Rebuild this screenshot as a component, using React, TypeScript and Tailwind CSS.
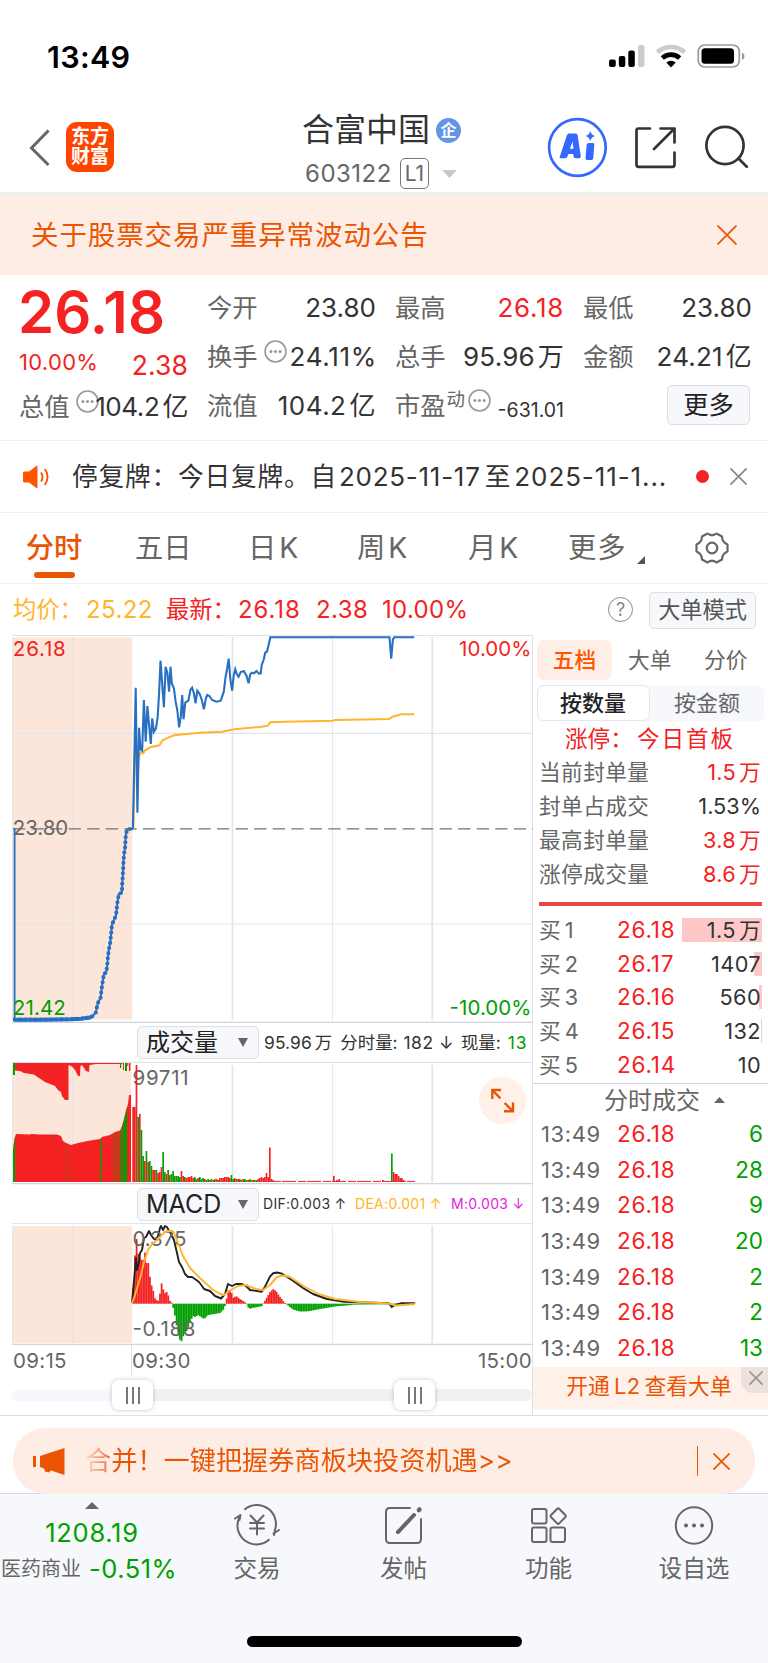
import React from "react";

type Pt = [number, number];

const toPath = (flat: number[], sx = 1, sy = 1, oy = 0): string => {
  const out: string[] = [];
  for (let i = 0; i < flat.length; i += 2) {
    out.push(`${(flat[i] / sx).toFixed(1)},${(flat[i + 1] / sy + oy).toFixed(1)}`);
  }
  return out.join(" ");
};

const interpolate = (points: Pt[], x: number): number => {
  for (let i = 1; i < points.length; i++) {
    if (x <= points[i][0]) {
      const [x0, y0] = points[i - 1];
      const [x1, y1] = points[i];
      return y0 + ((y1 - y0) * (x - x0)) / (x1 - x0 || 1);
    }
  }
  return points[points.length - 1][1];
};

const RED = "#f42222";
const GREEN = "#00a000";
const GRID = "#e1e5ed";

/* ---------- intraday series ---------- */

const auction = [
  43, 1199, 120, 1199, 205, 1198, 235, 1196, 265, 1192, 278, 1178, 284, 1150, 292, 1133, 295, 1108, 298, 1087, 302, 1060,
  308, 1059, 311, 1040, 313, 1015, 316, 990, 320, 968, 323, 940, 325, 915, 331, 900, 337, 886, 339, 868, 341, 848, 345,
  822, 354, 818, 355, 793, 357, 762, 359, 718, 361, 698, 363, 685, 365, 650, 368, 632, 372, 627, 386, 627,
];

const price = [
  386, 626, 394, 203, 399, 578, 404, 323, 408, 388, 413, 392, 418, 240, 423, 365, 428, 258, 438, 372, 442, 295, 447, 335,
  453, 325, 458, 290, 462, 220, 466, 122, 476, 262, 481, 140, 486, 160, 491, 215, 495, 140, 499, 190, 505, 205, 510, 245,
  515, 270, 520, 322, 525, 290, 529, 225, 533, 298, 538, 248, 547, 242, 553, 210, 558, 203, 563, 220, 568, 250, 573, 212,
  580, 222, 586, 240, 592, 268, 598, 235, 602, 225, 608, 228, 616, 240, 628, 245, 641, 242, 650, 215, 655, 170, 659, 150,
  664, 116, 669, 180, 674, 212, 679, 165, 683, 148, 688, 163, 693, 170, 699, 156, 708, 153, 716, 168, 722, 190, 727, 162,
  732, 158, 738, 160, 745, 153, 752, 161, 757, 160, 760, 135, 766, 118, 770, 98, 775, 95, 780, 75, 785, 52, 1131, 52,
  1136, 116, 1141, 58, 1145, 52, 1203, 52,
];

const average = [
  387, 626, 392, 390, 399, 440, 405, 405, 409, 397, 416, 400, 422, 390, 438, 381, 463, 376, 472, 361, 490, 352, 505, 346,
  580, 338, 645, 335, 680, 328, 755, 321, 778, 317, 785, 307, 830, 305, 965, 302, 975, 300, 1130, 297, 1140, 290, 1165,
  283, 1203, 283,
];

const dif = [
  132, 1303, 136, 1258, 137, 1270, 139, 1262, 140, 1253, 142, 1250, 144, 1238, 146, 1237, 149, 1231, 151, 1235, 154,
  1239, 156, 1240, 158, 1236, 160, 1228, 161, 1226, 163, 1230, 165, 1226, 167, 1227, 168, 1229, 171, 1234, 174, 1240,
  177, 1253, 179, 1262, 182, 1267, 185, 1274, 188, 1277, 192, 1277, 195, 1279, 199, 1282, 202, 1286, 204, 1289, 210,
  1291, 215, 1296, 221, 1298.5, 225, 1294, 228, 1284, 232, 1286, 236, 1284, 242, 1284, 246, 1286, 250, 1290, 261.7,
  1291.7, 265, 1286.7, 270, 1276.7, 273, 1273.3, 277, 1272.5, 282, 1273.7, 293, 1280.7, 303, 1288, 313, 1294, 327, 1299,
  344, 1301.7, 389, 1303.3, 391.5, 1306.5, 396, 1304.7, 401, 1303.3, 415, 1303.3,
];

const dea = [
  132, 1303, 135, 1295, 141, 1275, 144, 1262, 148, 1250, 152, 1244, 156, 1241, 160, 1237, 165, 1232, 168, 1231, 172, 1231,
  174, 1233, 178, 1243, 183, 1256, 190, 1268, 200, 1278, 212, 1289, 220, 1294, 224, 1295, 229, 1291, 238, 1286, 246, 1285,
  256, 1289, 263, 1290, 270, 1285, 277, 1277, 283, 1275.5, 290, 1277, 305, 1287, 320, 1294.5, 335, 1299, 360, 1302, 389,
  1303.5, 396, 1305.5, 415, 1304,
];

const ZERO = 1303.7;
const histogram: Pt[] = [
  [132, 1300], [134, 1280], [135.5, 1239], [137, 1239], [137.5, 1252], [140, 1258], [143, 1262], [144, 1252], [145.5, 1253],
  [146, 1263], [148.5, 1263], [149, 1271], [151, 1284], [153, 1289], [154, 1297], [156, 1300], [159, 1301], [160, 1293],
  [161, 1283], [162.5, 1284], [164, 1295], [166, 1291], [168, 1294], [169, 1300], [172, 1303], [173, 1307], [175, 1316],
  [177, 1328], [179, 1337], [181, 1343], [183, 1337], [185, 1331], [187, 1331], [190, 1322], [193, 1316], [195, 1317],
  [198, 1315], [201, 1317], [204, 1319], [208, 1315], [214, 1314], [220, 1313], [224, 1309], [225.5, 1304], [226.5, 1299],
  [228, 1290], [231, 1291], [233, 1298], [236, 1296], [240, 1299], [246, 1303], [247, 1305], [249, 1309], [252, 1308],
  [258, 1307], [262, 1306], [263.5, 1303], [266, 1299], [270, 1292], [273, 1289], [276, 1291], [280, 1297], [285, 1303],
  [288, 1305.5], [293, 1309.5], [300, 1311.5], [308, 1311.3], [320, 1309], [335, 1306.5], [355, 1304.6], [388, 1304.2],
  [390, 1305], [392, 1309], [394, 1305.5], [397, 1303.2], [415, 1303.2],
];

/* top edge and colour of every volume bar after the open */
const BAR = 1.667;
const openingBars: Array<[number, "r" | "g"]> = [
  [1107, "r"], [1107, "r"], [1065, "r"], [1117, "g"], [1114, "r"], [1130, "g"], [1156, "g"], [1161, "r"], [1151, "g"],
  [1162, "r"], [1161, "g"], [1166, "g"], [1170, "r"], [1170, "r"], [1170, "g"], [1173, "r"], [1172, "r"], [1167, "r"],
  [1152, "g"], [1172, "g"], [1174, "r"], [1170, "g"], [1175, "r"], [1174, "g"], [1171, "g"], [1176, "g"], [1176, "g"],
  [1176, "g"], [1177, "g"], [1171, "r"], [1176, "r"], [1177, "g"], [1178, "r"], [1177, "r"], [1177, "r"], [1176, "r"],
  [1178, "r"], [1177, "g"], [1179, "g"], [1178, "r"], [1177, "g"], [1179, "g"], [1178, "g"], [1179, "r"], [1180, "g"],
  [1179, "g"], [1180, "r"], [1179, "g"], [1180, "g"], [1179, "r"], [1179, "r"], [1180, "g"], [1178, "r"], [1178, "r"],
  [1178, "r"], [1177, "r"], [1177, "r"], [1177, "r"], [1178, "r"], [1175, "g"], [1179, "g"], [1178, "r"], [1179, "g"],
  [1179, "r"], [1179, "r"], [1180, "g"], [1179, "r"], [1179, "g"], [1180, "g"], [1180, "g"], [1179, "r"], [1180, "g"],
  [1180, "r"], [1180, "g"], [1180, "g"], [1179, "r"], [1178, "r"], [1177, "r"], [1178, "r"], [1177, "r"], [1173, "r"],
  [1177, "r"], [1147.5, "r"], [1179, "r"], [1180, "r"],
];

const lateBars: Array<[number, number, string]> = [
  [333, 1176, RED], [336, 1180, RED], [338.3, 1179, RED], [382, 1180, RED], [391, 1153.5, GREEN], [392.7, 1172, RED],
  [394.3, 1174, RED], [396, 1174, RED], [397.7, 1176, RED], [399.3, 1178, RED], [401, 1178, RED], [402.5, 1180, RED],
];

const auctionBottom =
  "13,1182 13,1152 14,1142 15,1137 16,1134 30,1134.5 31,1134 40,1134.5 57,1134.5 61,1136 63,1141 66,1143 71,1145 78,1143 90,1140.5 100,1139 102,1137 110,1135 115,1132 120,1130.5 122,1126 124,1119 126,1110 128,1104 129,1095 131,1095 131,1182";
const auctionTop =
  "15,1063 15,1070.5 20,1071 24,1073 34,1074.5 36,1076 39,1078 45,1082 50,1084 55,1086 58,1090 61,1092 62,1096 65,1100 68.5,1100 68.5,1065 72,1066.5 75,1070 78,1076 80,1076 80.5,1066 82,1065 84,1068 86,1071 89,1072 89.5,1065 96,1064 122,1064 123,1063";

const Verticals = ({ top, bottom }: { top: number; bottom: number }) => (
  <g stroke={GRID}>
    <line x1={12.6} x2={12.6} y1={top} y2={bottom} strokeWidth={1} />
    <line x1={72.7} x2={72.7} y1={top} y2={bottom} strokeWidth={1.2} />
    <line x1={232.5} x2={232.5} y1={top} y2={bottom} strokeWidth={1.8} />
    <line x1={332.4} x2={332.4} y1={top} y2={bottom} strokeWidth={1} />
    <line x1={432.2} x2={432.2} y1={top} y2={bottom} strokeWidth={1.8} />
  </g>
);

const PriceChart = () => (
  <svg className="block h-[388px] w-[533px]" viewBox="0 635 533 388" fontFamily="Inter, 'Liberation Sans', sans-serif">
    <rect x={12.5} y={637.5} width={119.7} height={382} fill="#fce6da" />
    <line x1={12} x2={533} y1={635.5} y2={635.5} stroke="#dfe2e8" />
    <Verticals top={637} bottom={1020} />
    <g stroke={GRID} strokeWidth={1.2}>
      <line x1={12} x2={532} y1={733.4} y2={733.4} />
      <line x1={12} x2={532} y1={924} y2={924} />
    </g>
    <line x1={12} x2={533} y1={1022.3} y2={1022.3} stroke="#cfd4dd" strokeWidth={1.2} />
    <line x1={13} x2={533} y1={828.8} y2={828.8} stroke="#737373" strokeWidth={1.3} strokeDasharray="12.3 6.25" />
    <polyline points={toPath(average, 2.904, 3, 620)} fill="none" stroke="#ffb52b" strokeWidth={2} />
    <line x1={14.6} x2={14.6} y1={828} y2={1020} stroke="#2a70c2" strokeWidth={1.8} />
    <g fontSize={20.5}>
      <text x={12.8} y={655.8} fill={RED} textLength={53}>26.18</text>
      <text x={459} y={655.8} fill={RED} textLength={72.5}>10.00%</text>
      <text x={12.8} y={835.3} fill="#666" textLength={55.5}>23.80</text>
      <text x={12.8} y={1014.8} fill={GREEN} textLength={53}>21.42</text>
      <text x={449.5} y={1014.8} fill={GREEN} textLength={82}>-10.00%</text>
    </g>
    <polyline
      points={toPath(auction, 2.904, 3, 620)}
      fill="none"
      stroke="#2a70c2"
      strokeWidth={2}
      strokeLinejoin="round"
    />
    <polyline
      points={toPath(auction, 2.904, 3, 620)}
      fill="none"
      stroke="#2a70c2"
      strokeWidth={4.2}
      strokeLinecap="round"
      strokeDasharray="0 5.2"
    />
    <polyline points={toPath(auction.slice(0, 10), 2.904, 3, 620)} fill="none" stroke="#2a70c2" strokeWidth={4} />
    <polyline points={toPath(price, 2.904, 3, 620)} fill="none" stroke="#2a70c2" strokeWidth={2.1} />
  </svg>
);

const VolumeChart = () => (
  <svg className="block h-[123px] w-[533px]" viewBox="0 1062 533 123" fontFamily="Inter, 'Liberation Sans', sans-serif">
    <rect x={12.5} y={1063} width={118.7} height={119} fill="#fce6da" />
    <Verticals top={1065} bottom={1182} />
    <line x1={12} x2={533} y1={1062.5} y2={1062.5} stroke="#dfe2e8" />
    <line x1={12} x2={533} y1={1183.6} y2={1183.6} stroke="#cfd4dd" strokeWidth={1.2} />
    <polygon points={auctionTop} fill={RED} />
    <polygon points={auctionBottom} fill={RED} />
    <g fill={GREEN}>
      <rect x={13} y={1063} width={2} height={12} />
      <polygon points="13,1182 13,1152 14,1142 15,1137 15,1182" />
      <rect x={120} y={1063} width={1.2} height={5} />
      <rect x={125} y={1063} width={2} height={8} />
      <rect x={100.3} y={1139} width={1.5} height={43} />
      <rect x={119.8} y={1131} width={1.4} height={51} />
      <polygon points="121.8,1182 121.8,1127 123.2,1122 123.2,1182" />
      <polygon points="123.8,1182 123.8,1120 127,1109 127,1182" />
    </g>
    <g fill="#8f5a12">
      <rect x={67.3} y={1143.5} width={0.9} height={38.5} />
      <rect x={113.2} y={1134} width={1} height={48} />
      <rect x={115.4} y={1133} width={1} height={49} />
      <rect x={117.6} y={1132} width={0.8} height={50} />
    </g>
    <g fill={RED}>
      <rect x={123} y={1063} width={1} height={7} />
      <rect x={127.3} y={1063} width={1} height={3} />
      <rect x={129} y={1063} width={1.4} height={8} />
    </g>
    <text x={132.5} y={1084.6} fontSize={20.5} fill="#666" textLength={56}>99711</text>
    {openingBars.map(([top, c], i) => (
      <rect key={i} x={132.3 + i * BAR} y={top} width={BAR} height={1182 - top} fill={c === "r" ? RED : GREEN} />
    ))}
    <line x1={273} x2={415} y1={1181.4} y2={1181.4} stroke={RED} strokeWidth={1} strokeDasharray="8 1 14 2" />
    {lateBars.map(([x, top, c]) => (
      <rect key={x} x={x} y={top} width={BAR} height={1182 - top} fill={c} />
    ))}
    <circle cx={502.5} cy={1100.5} r={23.5} fill="#fff0e9" />
    <g fill="none" stroke="#ea5504" strokeWidth={2.4}>
      <path d="M492.3 1099v-9h8.8M492.8 1090.5l7.6 7.8" />
      <path d="M513 1102.5v8.800h-9M512.600 1110.800l-8-7.800" />
    </g>
  </svg>
);

const MacdChart = () => {
  const bars: React.ReactNode[] = [];
  for (let x = 132.4; x < 415; x += BAR) {
    const y = interpolate(histogram, x + BAR / 2);
    const up = y < ZERO;
    bars.push(
      <rect key={x} x={x} y={up ? y : ZERO} width={BAR + 0.1} height={Math.max(Math.abs(y - ZERO), 0.5)} fill={up ? RED : GREEN} />,
    );
  }
  return (
    <svg className="block h-[122px] w-[533px]" viewBox="0 1223 533 122" fontFamily="Inter, 'Liberation Sans', sans-serif">
      <rect x={12.5} y={1226} width={119.7} height={117} fill="#fce6da" />
      <Verticals top={1226} bottom={1343} />
      <line x1={12} x2={533} y1={1223.6} y2={1223.6} stroke="#dfe2e8" />
      <line x1={12} x2={533} y1={1344.4} y2={1344.4} stroke="#cfd4dd" strokeWidth={1.2} />
      {bars}
      <polyline points={toPath(dif)} fill="none" stroke="#222" strokeWidth={1.9} strokeLinejoin="round" />
      <g fontSize={20.5} fill="#666">
        <text x={132.5} y={1245.6} textLength={54}>0.375</text>
        <text x={132.5} y={1336} textLength={63}>-0.188</text>
      </g>
      <polyline points={toPath(dea)} fill="none" stroke="#ffb52b" strokeWidth={1.9} strokeLinejoin="round" />
    </svg>
  );
};

/* ---------- small pieces ---------- */

const Cross = ({ className }: { className: string }) => (
  <svg viewBox="0 0 20 20" className={className} fill="none" stroke="currentColor" strokeWidth="1.7">
    <path d="M.5 .5l19 19M19.5 .5l-19 19" vectorEffect="non-scaling-stroke" />
  </svg>
);

const Dots = () => (
  <svg viewBox="0 0 24 24" className="size-[23px] shrink-0" fill="none">
    <circle cx="12" cy="12" r="10.9" stroke="#999" strokeWidth="1.7" />
    <g fill="#999">
      <circle cx="7.2" cy="12" r="1.6" />
      <circle cx="12" cy="12" r="1.6" />
      <circle cx="16.8" cy="12" r="1.6" />
    </g>
  </svg>
);

const Unit = ({ children }: { children: React.ReactNode }) => <span className="ml-[3px]">{children}</span>;

const StatusBar = () => (
  <div className="flex h-[96px] items-start justify-between pl-[47px] pr-[23px] pt-[41px]">
    <div className="h-[31px] text-[30.5px] font-semibold leading-[31px] tracking-[0.3px] text-black">13:49</div>
    <svg className="mt-px h-[30px] w-[138px]" viewBox="607 42 138 30">
      <g fill="#000">
        <rect x="609" y="59.5" width="6.8" height="7.5" rx="2" />
        <rect x="618.8" y="56" width="6.5" height="11" rx="2" />
        <rect x="628.3" y="50.5" width="6.5" height="16.5" rx="2" />
      </g>
      <rect x="638" y="45" width="6.5" height="22" rx="2" fill="#ccc" />
      <g fill="none">
        <path d="M657.3 52.3a20.3 20.3 0 0 1 27.4 0" stroke="#ccc" strokeWidth="4.6" />
        <path d="M662.3 58a12.8 12.8 0 0 1 17.4 0" stroke="#000" strokeWidth="4.6" />
      </g>
      <path d="M666.3 62.5a7 7 0 0 1 9.4 0l-4.7 4.9z" fill="#000" />
      <rect x="698.3" y="45" width="41" height="22" rx="6.5" fill="none" stroke="#999" strokeWidth="1.7" />
      <rect x="701.5" y="48.3" width="32.5" height="15.5" rx="3.5" fill="#000" />
      <path d="M742 52.5c3.2 1.3 3.2 6.2 0 7.500z" fill="#999" />
    </svg>
  </div>
);

const Header = () => (
  <div className="flex h-[98px] items-start border-b-2 border-[#eceef1]">
    <svg className="ml-[29px] mt-[33px] h-[38px] w-[22px]" viewBox="0 0 22 38" fill="none">
      <path d="M19.5 1.5L2.5 19l17 17" stroke="#666" strokeWidth="3" />
    </svg>
    <div className="ml-[15px] mt-[26px] flex h-[50px] w-[48px] flex-col items-center justify-center rounded-[11px] bg-[#ff4400] text-[19px] font-bold leading-[20px] text-white">
      <span>东方</span>
      <span>财富</span>
    </div>
    <div className="ml-[188px] w-[233px]">
      <div className="mt-[16px] flex h-[36px] items-center">
        <span className="text-[32px] leading-[36px] text-[#333]">合富中国</span>
        <span className="ml-[6px] flex size-[25px] items-center justify-center rounded-full bg-[#6394e8] text-[16px] font-bold leading-none text-white">
          企
        </span>
      </div>
      <div className="mt-[10px] flex h-[31px] items-center text-[#666]">
        <span className="ml-[3px] text-[24px] leading-[31px] tracking-[0.5px]">603122</span>
        <span className="ml-[8px] flex h-[31px] w-[29px] items-center justify-center rounded-[5px] border-[1.5px] border-[#777] text-[21px] leading-none">
          L1
        </span>
        <svg className="ml-[13px] h-[8px] w-[15px]" viewBox="0 0 15 8">
          <path d="M0 0h15l-7.5 8z" fill="#c8c8c8" />
        </svg>
      </div>
    </div>
    <svg className="ml-[11px] mt-[20px] h-[62px] w-[206px]" viewBox="546 116 206 62" fill="none">
      <circle cx="577.4" cy="147.5" r="28.3" stroke="#3568ff" strokeWidth="2.7" />
      <path
        d="M568.8 133.5h6.800q1.8 0 2 1.8l3.2 20.700q.3 2.300-2 2.300h-3.200q-1.800 0-2-1.700l-.4-2.600h-4.700l-1.200 2.800q-.7 1.500-2.300 1.500h-3.700q-2.300 0-1.400-2.100l7-20.900q.6-1.800 1.900-1.800zM572.600 141.500l-2.700 7.300h3.600z"
        fill="#3568ff"
        fillRule="evenodd"
      />
      <path d="M588.5 143h4.500q1.500 0 1.300 1.500l-1 13.500q-.2 2-2 2h-4.200q-1.800 0-1.600-1.800l1.200-13.400q.2-1.800 1.800-1.800z" fill="#3568ff" />
      <path d="M590.3 131q1 3.800 4.700 5-3.700 1.200-4.700 5-1-3.800-4.700-5 3.700-1.200 4.700-5z" fill="#3568ff" />
      <g stroke="#333" strokeWidth="2.7" strokeLinecap="round" strokeLinejoin="round">
        <path d="M650 128.500h-11.500q-2 0-2 2v34.300q0 2 2 2h34q2 0 2-2v-12.300" />
        <path d="M660.500 128.500h14v14M674 129l-20 20" />
        <circle cx="725" cy="145.500" r="18.600" />
        <path d="M738.500 158.500l8.300 8.200" />
      </g>
    </svg>
  </div>
);

const Metric = ({
  label,
  children,
  badge,
  tone = "text-[#333] tracking-[0px]",
}: {
  label: string;
  children: React.ReactNode;
  badge?: boolean;
  tone?: string;
}) => (
  <div className="flex h-[30px] w-[169px] items-center justify-between">
    <span className="flex items-center text-[25.3px] leading-[30px] text-[#666]">
      {label}
      {badge && (
        <span className="-mr-8 mb-[11px] ml-[6px] flex">
          <Dots />
        </span>
      )}
    </span>
    <span className={`whitespace-nowrap text-[26px] leading-[30px] ${tone}`}>{children}</span>
  </div>
);

const Quote = () => (
  <div className="flex h-[166px] border-b border-[#eceef1] pl-[19px]">
    <div className="w-[169px]">
      <div className="-ml-px mt-[8px] h-[58px] text-[58px] font-semibold leading-[58px] tracking-[0.2px] text-[#f42222]">26.18</div>
      <div className="mt-[6px] flex h-[30px] items-center justify-between text-[#f42222]">
        <span className="text-[22px] leading-[30px] tracking-[0.3px]">10.00%</span>
        <span className="mt-[5px] text-[26.5px] leading-[30px] tracking-[0.1px]">2.38</span>
      </div>
      <div className="mt-[15px]">
        <Metric label="总值" badge tone="text-[#333] tracking-[-0.4px]">
          104.2<Unit>亿</Unit>
        </Metric>
      </div>
    </div>
    <div className="ml-[19px] mt-[18px] flex w-[169px] flex-col gap-[19px]">
      <Metric label="今开">23.80</Metric>
      <Metric label="换手" badge tone="text-[#333] tracking-[0.7px] -mr-px">24.11%</Metric>
      <Metric label="流值" tone="text-[#333] tracking-[0.5px]">
        104.2<Unit>亿</Unit>
      </Metric>
    </div>
    <div className="ml-[19px] mt-[18px] flex w-[169px] flex-col gap-[19px]">
      <Metric label="最高" tone="text-[#f42222] tracking-[0.7px]">26.18</Metric>
      <Metric label="总手" tone="text-[#333] tracking-[0.2px]">
        95.96<Unit>万</Unit>
      </Metric>
      <div className="flex h-[30px] items-center text-[#666]">
        <span className="text-[25.3px] leading-[30px]">市盈</span>
        <span className="mb-[14px] ml-px text-[18.5px] leading-none">动</span>
        <span className="mb-[11px] ml-[3px] flex">
          <Dots />
        </span>
        <span className="ml-auto mt-[9px] text-[19.5px] leading-none text-[#333]">-631.01</span>
      </div>
    </div>
    <div className="ml-[19px] mt-[18px] flex w-[169px] flex-col gap-[19px]">
      <Metric label="最低">23.80</Metric>
      <Metric label="金额" tone="text-[#333] tracking-[0.2px]">
        24.21<Unit>亿</Unit>
      </Metric>
      <div className="-mt-[6px] ml-[84px] flex h-[40px] w-[83px] items-center justify-center rounded-[5px] border-[1.5px] border-[#dcdfe4] bg-[#f7f8fb] text-[25.3px] leading-none text-[#222]">
        更多
      </div>
    </div>
  </div>
);

const Notice = () => (
  <div className="flex h-[72px] items-center border-b border-[#eceef1] pl-[23px]">
    <svg className="h-[24px] w-[28px]" viewBox="0 0 28 24" fill="none">
      <path d="M1.5 6.500H6L13 1.200q1.500-1 1.500 1v19.600q0 2-1.500 1L6 17.500H1.500Q0 17.500 0 16V8q0-1.500 1.500-1.500z" fill="#ff5500" />
      <path d="M18 7.500q3 4.500 0 9M21.800 4q5.500 8 0 16" stroke="#ff5500" strokeWidth="1.9" />
    </svg>
    <div className="ml-[21px] flex w-[594px] whitespace-nowrap text-[25.7px] leading-[30px] text-[#333]">
      <span className="tracking-[0.8px]">停复牌：今日复牌。自</span>
      <span className="ml-[2px] text-[26px] tracking-[0.75px]">2025-11-17</span>
      <span className="ml-[4px]">至</span>
      <span className="ml-[4px] text-[26px] tracking-[0.9px]">2025-11-1...</span>
    </div>
    <span className="ml-[30px] size-[12.5px] rounded-full bg-[#f42222]" />
    <Cross className="ml-[21px] size-[17px] text-[#888]" />
  </div>
);

const Tabs = () => (
  <div className="flex h-[71px] border-b border-[#f0f1f4] pt-[19px] text-[28.3px] leading-[32px] text-[#666]">
    <div className="ml-[25px] flex w-[58px] flex-col items-center text-[#ea5504]">
      <span className="font-medium">分时</span>
      <span className="mt-[8px] h-[6px] w-[41px] rounded-full bg-[#ea5504]" />
    </div>
    <span className="ml-[52px] w-[57px]">五日</span>
    <span className="ml-[56px] w-[57px] whitespace-nowrap">日<span className="ml-[3px]">K</span></span>
    <span className="ml-[52px] w-[57px] whitespace-nowrap">周<span className="ml-[3px]">K</span></span>
    <span className="ml-[54px] w-[57px] whitespace-nowrap">月<span className="ml-[3px]">K</span></span>
    <span className="ml-[43px] w-[60px] tracking-[1px]">更多</span>
    <svg className="ml-[9px] mt-[24px] size-[8px]" viewBox="0 0 8 8">
      <path d="M8 0v8H0z" fill="#555" />
    </svg>
    <svg className="ml-[50px] h-[32px] w-[34px]" viewBox="0 0 34 32" fill="none" stroke="#666" strokeWidth="2.2" strokeLinejoin="round">
      <path d="M12.500 1.500Q17 5 21.500 1.500L27 4.500Q27 10 32.500 12.500V19.500Q27 22 27 27.500L21.500 30.500Q17 27 12.500 30.500L7 27.500Q7 22 1.500 19.500V12.500Q7 10 7 4.500Z" />
      <circle cx="17" cy="16" r="5.3" />
    </svg>
  </div>
);

const InfoRow = () => (
  <div className="flex h-[51px] items-center pl-[13px] text-[24px] leading-[30px]">
    <span className="w-[73px] whitespace-nowrap text-[23.3px] text-[#ffb52b]">均价：</span>
    <span className="w-[80px] tracking-[0.4px] text-[#ffb52b]">25.22</span>
    <span className="w-[72px] whitespace-nowrap text-[23.3px] text-[#f42222]">最新：</span>
    <span className="w-[78px] tracking-[0.9px] text-[#f42222]">26.18</span>
    <span className="w-[66px] tracking-[0.4px] text-[#f42222]">2.38</span>
    <span className="w-[226px] tracking-[0.3px] text-[#f42222]">10.00%</span>
    <span className="flex size-[25px] items-center justify-center rounded-full border-[1.5px] border-[#888] text-[18px] leading-none text-[#888]">
      ?
    </span>
    <span className="ml-[16px] mt-[2px] flex h-[37px] w-[107px] items-center justify-center whitespace-nowrap rounded-[5px] border-[1.5px] border-[#dcdfe4] bg-[#f7f8fb] text-[22.2px] leading-none text-[#555]">
      大单模式
    </span>
  </div>
);

const Selector = ({ label, size }: { label: string; size: string }) => (
  <div className="ml-[137px] flex h-[33px] w-[122px] items-center justify-between rounded-[5px] border-[1.5px] border-[#dcdfe4] bg-[#f7f8fb] pl-[8px] pr-[10px] text-[#222]">
    <span className={`leading-none ${size}`}>{label}</span>
    <svg className="h-[9px] w-[10px]" viewBox="0 0 10 9">
      <path d="M0 0h10L5 9z" fill="#666" />
    </svg>
  </div>
);

const Handle = () => (
  <div className="z-10 flex h-[30px] w-[41px] items-center justify-center gap-[4px] rounded-[7px] bg-white shadow-[0_0_5px_rgba(0,0,0,0.22)]">
    <i className="h-[17px] w-[2px] bg-[#777]" />
    <i className="h-[17px] w-[2px] bg-[#777]" />
    <i className="h-[17px] w-[2px] bg-[#777]" />
  </div>
);

const Charts = () => (
  <div className="w-[533px] border-r border-[#dfe2e8]">
    <PriceChart />
    <div className="flex h-[39px] items-center">
      <Selector label="成交量" size="text-[24px]" />
      <div className="ml-[5px] flex whitespace-nowrap text-[17.4px] leading-[22px] text-[#333]">
        <span className="tracking-[0.1px]">95.96<Unit>万</Unit></span>
        <span className="ml-[8px]">分时量:</span>
        <span className="ml-[6px] tracking-[0.5px]">182 ↓</span>
        <span className="ml-[7px]">现量:</span>
        <span className="ml-[7px] tracking-[0.9px] text-[#00a000]">13</span>
      </div>
    </div>
    <VolumeChart />
    <div className="flex h-[38px] items-center">
      <Selector label="MACD" size="text-[25px]" />
      <div className="ml-[4px] flex whitespace-nowrap text-[14px] leading-[20px] tracking-[0.3px] text-[#333]">
        <span className="w-[92px]">DIF:0.003 ↑</span>
        <span className="w-[96px] text-[#ffb52b]">DEA:0.001 ↑</span>
        <span className="text-[#e01ee0]">M:0.003 ↓</span>
      </div>
    </div>
    <MacdChart />
    <div className="flex h-[30px] items-center text-[20.5px] leading-none text-[#666]">
      <span className="ml-[13px] mt-[2px] w-[118px] tracking-[0.3px]">09:15</span>
      <span className="flex h-[30px] items-center border-l border-[#dfe2e8] pt-[2px] tracking-[0.3px]">09:30</span>
      <span className="ml-auto mt-[2px] tracking-[0.3px]">15:00</span>
    </div>
    <div className="flex h-[40px] items-center pl-[12px]">
      <div className="-mr-1 h-[12px] w-[104px] rounded-l-full bg-[#f7f8fb]" />
      <Handle />
      <div className="h-[12px] w-[241px] bg-[#f1f1f4]" />
      <Handle />
      <div className="-ml-1 h-[12px] flex-1 rounded-r-full bg-[#f1f1f4]" />
    </div>
  </div>
);

const seal: Array<[string, React.ReactNode, boolean]> = [
  ["当前封单量", <>1.5<Unit>万</Unit></>, true],
  ["封单占成交", "1.53%", false],
  ["最高封单量", <>3.8<Unit>万</Unit></>, true],
  ["涨停成交量", <>8.6<Unit>万</Unit></>, true],
];

const bids: Array<[string, string, React.ReactNode, number]> = [
  ["1", "26.18", <>1.5<Unit>万</Unit></>, 80],
  ["2", "26.17", "1407", 8],
  ["3", "26.16", "560", 3],
  ["4", "26.15", "132", 1],
  ["5", "26.14", "10", 0],
];

const trades = [6, 28, 9, 20, 2, 2, 13];

const OrderBook = () => (
  <div className="w-[235px] text-[21.7px] leading-[24px]">
    <div className="mt-[5px] flex h-[40px] items-center pl-[4px] text-[#666]">
      <span className="flex h-[40px] w-[75px] items-center justify-center rounded-[7px] bg-[#ffeee5] font-medium text-[#ff5500]">五档</span>
      <span className="ml-[16px] w-[76px]">大单</span>
      <span>分价</span>
    </div>
    <div className="ml-[4px] mt-[5px] flex h-[36px] w-[227px] items-center rounded-[7px] bg-[#f7f8fb] text-[22px]">
      <span className="flex h-[36px] w-[113px] items-center justify-center rounded-[7px] border border-[#e4e6eb] bg-white pr-px font-medium text-[#222]">
        按数量
      </span>
      <span className="flex w-[114px] items-center justify-center text-[#666]">按金额</span>
    </div>
    <div className="mt-[2px] flex h-[32px] items-center whitespace-nowrap pl-[32px] text-[22.6px] leading-[32px] text-[#f42222]">
      <span className="w-[72px]">涨停：</span>
      <span className="tracking-[1.9px]">今日首板</span>
    </div>
    {seal.map(([label, value, red]) => (
      <div key={label} className="flex h-[34px] items-center justify-between pl-[6px] pr-[7px]">
        <span className="tracking-[0.4px] text-[#666]">{label}</span>
        <span className={red ? "text-[#f42222] tracking-[0.3px]" : "text-[#333]"}>{value}</span>
      </div>
    ))}
    <div className="ml-[6px] mt-[11px] h-[4px] w-[223px] bg-[#e84545]" />
    <div className="mt-[7px] h-[170px]">
      {bids.map(([n, price, qty, bar]) => (
        <div key={n} className="flex h-[33.8px] items-center pl-[6px] pr-[6px]">
          <span className="w-[78px] text-[#666]">
            买<span className="ml-[4px]">{n}</span>
          </span>
          <span className="text-[22.5px] tracking-[0.8px] text-[#f42222]">{price}</span>
          <span className="relative ml-auto flex h-[24px] w-[80px] items-center justify-end pr-px text-[#333]">
            <span className="absolute right-0 top-0 h-[24px] bg-[#ffc8c8]" style={{ width: bar }} />
            <span className="relative tracking-[0.4px]">{qty}</span>
          </span>
        </div>
      ))}
    </div>
    <div className="flex h-[33px] items-center border-t border-[#cfd4dd] pl-[71px] text-[#666]">
      <span className="text-[24px] leading-[33px]">分时成交</span>
      <svg className="ml-[14px] h-[6px] w-[11px]" viewBox="0 0 11 6">
        <path d="M5.5 0L11 6H0z" fill="#666" />
      </svg>
    </div>
    {trades.map((qty, i) => (
      <div key={i} className="flex h-[35.7px] items-center pl-[8px] pr-[5px]">
        <span className="w-[76px] text-[22px] tracking-[0.6px] text-[#666]">13:49</span>
        <span className="text-[22.5px] tracking-[0.8px] text-[#f42222]">26.18</span>
        <span className="ml-auto text-[22.5px] text-[#00a000]">{qty}</span>
      </div>
    ))}
    <div className="relative mt-px flex h-[42px] items-center justify-center bg-[#fff0e9] pb-[4px] text-[21.8px] text-[#ea5504]">
      <span className="mr-[3px] whitespace-nowrap">
        开通<span className="mx-[4px] tracking-[0.5px]">L2</span>查看大单
      </span>
      <span className="absolute right-0 top-0 flex h-[26px] w-[27px] items-center justify-center rounded-bl-[12px] bg-[#ede1dc]">
        <Cross className="ml-[3px] mt-[-4px] size-[14px] text-[#999]" />
      </span>
    </div>
  </div>
);

const Promo = () => (
  <div className="flex h-[78px] items-start border-t border-[#dcdfe4]">
    <div className="ml-[13px] mt-[12px] flex h-[66px] w-[742px] items-center rounded-[32px] bg-[#feede5] pl-[20px] text-[#ea5504]">
      <svg className="mt-px h-[27px] w-[32px]" viewBox="0 0 32 27" fill="#ea5504">
        <path d="M0 8h3v11H0zM7 8L31.5 0v27L18 22.500l-2 2-4-1-1-3-4-1.500z" />
      </svg>
      <span className="ml-[20px] whitespace-nowrap bg-gradient-to-r from-[#ffd9c4] to-[#ea5504] to-[7%] bg-clip-text text-[26.2px] leading-[36px] text-transparent">
        合并！一键把握券商板块投资机遇&gt;&gt;
      </span>
      <span className="ml-auto h-[30px] w-[1.5px] bg-[#ea5504]" />
      <Cross className="ml-[15px] mr-[25px] size-[17px]" />
    </div>
  </div>
);

const NavItem = ({ label, width, children }: { label: string; width: string; children: React.ReactNode }) => (
  <div className={`flex flex-col items-center ${width}`}>
    <svg className="mt-[9px] h-[44px] w-[46px]" viewBox="0 0 46 44" fill="none" stroke="#666" strokeWidth="2" strokeLinecap="round" strokeLinejoin="round">
      {children}
    </svg>
    <span className="mt-[8px] text-[23.6px] leading-[28px] text-[#666]">{label}</span>
  </div>
);

const BottomBar = () => (
  <div className="h-[170px] border-t border-[#d6d9de] bg-[#f7f8fb]">
    <div className="flex h-[142px]">
      <div className="flex w-[184px] flex-col items-center">
        <svg className="mt-[8px] h-[7px] w-[14px]" viewBox="0 0 14 7">
          <path d="M7 0l7 7H0z" fill="#666" />
        </svg>
        <span className="mt-[9px] text-[25.5px] leading-[30px] tracking-[0.7px] text-[#00a000]">1208.19</span>
        <span className="mt-[6px] flex w-full items-center pl-px">
          <span className="text-[20px] leading-[30px] text-[#666]">医药商业</span>
          <span className="ml-[8px] text-[25.5px] leading-[30px] tracking-[0.5px] text-[#00a000]">-0.51%</span>
        </span>
      </div>
      <NavItem label="交易" width="w-[146px]">
        <path d="M11 6.300A19 19 0 0 1 41 27M39.500 30.500l5.500-3.500M41 27l-1 5" />
        <path d="M35 36.800A19 19 0 0 1 5.500 14M1 15.500l5.500-3.500-1 5" />
        <path d="M16.500 12.500l6.500 7 6.500-7M23 19.500v12M16 20h14M16 25.500h14" />
      </NavItem>
      <NavItem label="发帖" width="w-[147px]">
        <path d="M29 5H9q-4 0-4 4v27q0 4 4 4h27q4 0 4-4V16" />
        <path d="M33 12L18.500 27.500 17 29" strokeWidth="4" />
        <path d="M38.500 6.500l-.6.600" strokeWidth="4.5" />
      </NavItem>
      <NavItem label="功能" width="w-[143px]">
        <rect x="6" y="6" width="14.500" height="14.500" rx="2" />
        <rect x="6" y="24.500" width="14.500" height="14.500" rx="2" />
        <rect x="24.500" y="24.500" width="14.500" height="14.500" rx="2" />
        <path d="M31.200 5.800q1-.9 2 0l6.300 6.400q.8.900 0 1.800l-6.300 6.400q-1 .9-2 0l-6.300-6.400q-.8-.9 0-1.800z" />
      </NavItem>
      <NavItem label="设自选" width="w-[148px]">
        <circle cx="23" cy="22.500" r="18.200" />
        <path d="M15 22.500h.01M23 22.500h.01M31 22.500h.01" strokeWidth="4" />
      </NavItem>
    </div>
    <div className="mx-auto h-[11px] w-[275px] rounded-full bg-black" />
  </div>
);

export default function App() {
  return (
    <div className="h-[1663px] w-[768px] overflow-hidden bg-white font-[Inter,'Noto_Sans_CJK_SC',sans-serif] antialiased">
      <StatusBar />
      <Header />
      <div className="flex h-[81px] items-center justify-between bg-[#feede5] pl-[31px] pr-[31px] text-[#ea5504]">
        <span className="text-[27.5px] leading-[34px] tracking-[0.9px]">关于股票交易严重异常波动公告</span>
        <Cross className="size-[20px]" />
      </div>
      <Quote />
      <Notice />
      <Tabs />
      <InfoRow />
      <div className="flex h-[780px]">
        <Charts />
        <OrderBook />
      </div>
      <Promo />
      <BottomBar />
    </div>
  );
}
